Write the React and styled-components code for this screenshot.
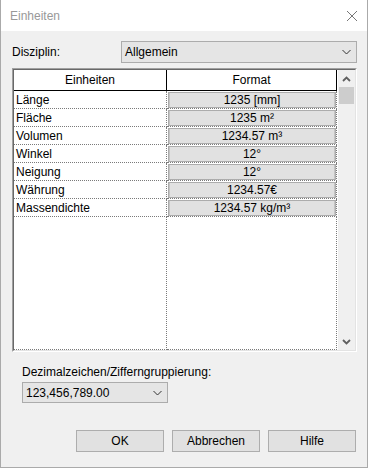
import React from 'react';
import styled, { createGlobalStyle } from 'styled-components';

const GlobalStyle = createGlobalStyle`
  html, body {
    margin: 0;
    padding: 0;
    background: #f0f0f0;
  }
  body {
    font-family: "Liberation Sans", Arial, sans-serif;
    font-size: 12px;
    color: #000;
  }
`;

const Window = styled.div`
  box-sizing: border-box;
  width: 368px;
  height: 468px;
  display: flex;
  flex-direction: column;
  background: #f0f0f0;
  border: 1px solid #aaaaaa;
  border-top: none;
`;

const TitleBar = styled.div`
  height: 31px;
  flex-shrink: 0;
  display: flex;
  align-items: center;
  justify-content: space-between;
  padding: 0 9px 0 9px;
  background: #fff;
`;

const Title = styled.span`
  color: #999;
  font-size: 12px;
`;

const Body = styled.div`
  flex: 1;
  display: flex;
  flex-direction: column;
  padding: 10px 10px 15px 11px;
`;

const FieldRow = styled.div`
  display: flex;
  align-items: center;
  height: 22px;
`;

const Label = styled.div`
  width: ${p => p.width || 'auto'};
  line-height: 14px;
`;

const Combo = styled.div`
  box-sizing: border-box;
  width: ${p => p.width}px;
  height: ${p => p.height || 22}px;
  display: flex;
  align-items: center;
  justify-content: space-between;
  padding: 0 5px 0 3px;
  background: #e5e5e5;
  border: 1px solid #acacac;
`;

const GridFrame = styled.div`
  box-sizing: border-box;
  margin-top: 5px;
  width: 345px;
  height: 284px;
  border: 1px solid;
  border-color: #a0a0a0 #ffffff #ffffff #a0a0a0;
`;

const GridInner = styled.div`
  box-sizing: border-box;
  height: 100%;
  display: flex;
  border: 1px solid;
  border-color: #696969 #e3e3e3 #e3e3e3 #696969;
`;

const DataArea = styled.div`
  width: 324px;
  display: flex;
  flex-direction: column;
  background: #fff;
`;

const Row = styled.div`
  display: flex;
  height: ${p => (p.header ? 21 : 18)}px;
  flex: ${p => (p.fill ? 1 : 'none')};
  box-sizing: border-box;
`;

const Cell = styled.div`
  box-sizing: border-box;
  width: ${p => p.width}px;
  display: flex;
  align-items: center;
  justify-content: ${p => (p.center ? 'center' : 'flex-start')};
  padding-left: ${p => (p.center ? 0 : 2)}px;
  border-right: 1px ${p => (p.header ? 'solid #000' : 'dotted #7a7a7a')};
  border-bottom: 1px ${p => (p.header ? 'solid #000' : 'dotted #7a7a7a')};
  white-space: nowrap;
`;

const FormatButton = styled.div`
  box-sizing: border-box;
  width: 168px;
  height: 16px;
  margin: 0 0 0 1px;
  align-self: flex-start;
  margin-top: 1px;
  display: flex;
  align-items: center;
  justify-content: center;
  background: #e1e1e1;
  border: 1px solid #acacac;
  box-shadow: inset 1px 0 #c4c4c4, inset -1px 0 #c4c4c4;
`;

const FormatCell = styled(Cell)`
  padding-left: 0;
  align-items: flex-start;
`;

const Scrollbar = styled.div`
  width: 17px;
  margin-left: auto;
  display: flex;
  flex-direction: column;
  background: #f0f0f0;
`;

const ArrowBox = styled.div`
  height: 17px;
  display: flex;
  align-items: center;
  justify-content: center;
`;

const Thumb = styled.div`
  height: 17px;
  margin: 0 1px;
  background: #cdcdcd;
`;

const Track = styled.div`
  flex: 1;
`;

const Section = styled.div`
  margin-top: 13px;
  padding-left: 10px;
  display: flex;
  flex-direction: column;
  gap: 3px;
`;

const ButtonRow = styled.div`
  margin-top: auto;
  margin-right: 1px;
  display: flex;
  justify-content: flex-end;
  gap: 8px;
`;

const Button = styled.div`
  box-sizing: border-box;
  width: 88px;
  height: 22px;
  display: flex;
  align-items: center;
  justify-content: center;
  background: #e1e1e1;
  border: 1px solid #adadad;
`;

const CloseIcon = () => (
  <svg width="12" height="12" viewBox="0 0 12 12">
    <path d="M1 1 L11 11 M11 1 L1 11" stroke="#777" strokeWidth="1" fill="none" />
  </svg>
);

const ComboChevron = () => (
  <svg width="9" height="6" viewBox="0 0 9 6">
    <polyline points="0.5,1 4.5,5 8.5,1" stroke="#333" strokeWidth="1" fill="none" />
  </svg>
);

const ScrollChevron = ({ up }) => (
  <svg width="9" height="6" viewBox="0 0 9 6">
    <polyline
      points={up ? '1,5 4.5,1.5 8,5' : '1,1 4.5,4.5 8,1'}
      stroke="#606060"
      strokeWidth="1.8"
      fill="none"
    />
  </svg>
);

const units = [
  ['Länge', '1235 [mm]'],
  ['Fläche', '1235 m²'],
  ['Volumen', '1234.57 m³'],
  ['Winkel', '12°'],
  ['Neigung', '12°'],
  ['Währung', '1234.57€'],
  ['Massendichte', '1234.57 kg/m³'],
];

export default function App() {
  return (
    <>
      <GlobalStyle />
      <Window>
        <TitleBar>
          <Title>Einheiten</Title>
          <CloseIcon />
        </TitleBar>
        <Body>
          <FieldRow>
            <Label width="109px">Disziplin:</Label>
            <Combo width={236}>
              <span>Allgemein</span>
              <ComboChevron />
            </Combo>
          </FieldRow>

          <GridFrame>
            <GridInner>
              <DataArea>
                <Row header>
                  <Cell header center width={153}>Einheiten</Cell>
                  <Cell header center width={170}>Format</Cell>
                </Row>
                {units.map(([name, format]) => (
                  <Row key={name}>
                    <Cell width={153}>{name}</Cell>
                    <FormatCell width={170}>
                      <FormatButton>{format}</FormatButton>
                    </FormatCell>
                  </Row>
                ))}
                <Row fill>
                  <Cell width={153} />
                  <Cell width={170} />
                </Row>
              </DataArea>
              <Scrollbar>
                <ArrowBox>
                  <ScrollChevron up />
                </ArrowBox>
                <Thumb />
                <Track />
                <ArrowBox>
                  <ScrollChevron />
                </ArrowBox>
              </Scrollbar>
            </GridInner>
          </GridFrame>

          <Section>
            <Label>Dezimalzeichen/Zifferngruppierung:</Label>
            <Combo width={146} height={21}>
              <span>123,456,789.00</span>
              <ComboChevron />
            </Combo>
          </Section>

          <ButtonRow>
            <Button>OK</Button>
            <Button>Abbrechen</Button>
            <Button>Hilfe</Button>
          </ButtonRow>
        </Body>
      </Window>
    </>
  );
}
